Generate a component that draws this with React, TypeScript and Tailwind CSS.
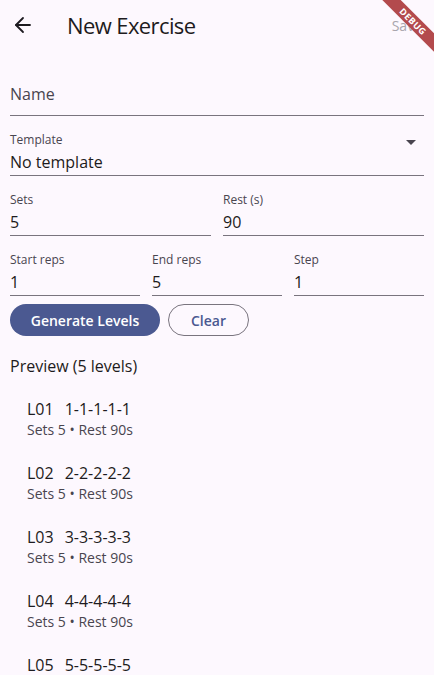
import { ArrowLeft } from 'lucide-react';

const levels = [1, 2, 3, 4, 5];

const Field = ({ label, value, className = '' }: { label: string; value: string; className?: string }) => (
  <div className={`flex flex-col pt-[16px] pb-[1px] border-b border-[#79747e] ${className}`}>
    <span className="text-[12px] leading-4 text-[#49454f]">{label}</span>
    <span className="mt-[2px] text-[16px] leading-6 text-[#1d1b20]">{value}</span>
  </div>
);

const App = () => {
  return (
    <div
      className="relative w-full min-h-[675px] overflow-hidden bg-[#fdf8fe] text-[#1d1b20]"
      style={{ fontFamily: '"Open Sans", "Noto Sans", sans-serif' }}
    >
      {/* app bar */}
      <header className="flex h-[50px] items-center">
        <div className="flex w-[44px] justify-center pl-[1px]">
          <ArrowLeft size={24} strokeWidth={1.8} className="text-[#1d1b20]" />
        </div>
        <h1 className="ml-[23px] flex-1 text-[22px] leading-7 tracking-[-0.6px] text-[#1d1b20]">New Exercise</h1>
        <span className="pr-[12px] text-[14px] font-medium text-[#a9a5ad]">Save</span>
      </header>

      <div className="px-[10px]">
        {/* name */}
        <div className="flex h-[66px] items-end pb-[9px] border-b border-[#79747e]">
          <span className="text-[16px] leading-6 text-[#49454f]">Name</span>
        </div>

        {/* template dropdown */}
        <div className="flex items-center border-b border-[#79747e]">
          <div className="flex flex-1 flex-col pt-[16px] pb-[1px]">
            <span className="text-[12px] leading-4 text-[#49454f]">Template</span>
            <span className="mt-[2px] text-[16px] font-medium leading-6 text-[#1d1b20]">No template</span>
          </div>
          <svg width="10" height="5" viewBox="0 0 10 5" className="mr-[8px] mb-[6px]">
            <path d="M0 0 L10 0 L5 5 Z" fill="#49454f" />
          </svg>
        </div>

        <div className="grid grid-cols-2 gap-x-[12px]">
          <Field label="Sets" value="5" />
          <Field label="Rest (s)" value="90" />
        </div>

        <div className="grid grid-cols-3 gap-x-[12px]">
          <Field label="Start reps" value="1" />
          <Field label="End reps" value="5" />
          <Field label="Step" value="1" />
        </div>

        <div className="mt-[8px] flex gap-[8px]">
          <button className="h-[32px] w-[150px] rounded-full bg-[#4b5991] text-[14px] font-semibold text-white">
            Generate Levels
          </button>
          <button className="h-[32px] w-[81px] rounded-full border border-[#79747e] text-[14px] font-semibold text-[#4b5991]">
            Clear
          </button>
        </div>

        <h2 className="mt-[18px] text-[16px] font-medium leading-6 text-[#1d1b20]">Preview (5 levels)</h2>

        <ul className="mt-[9px]">
          {levels.map((n) => (
            <li key={n} className="flex h-16 flex-col justify-center pl-[17px]">
              <div className="text-[16px] leading-[22px] text-[#1d1b20]">
                <span className="mr-[11px]">L0{n}</span>
                <span>{Array(5).fill(n).join('-')}</span>
              </div>
              <div className="text-[14px] leading-5 text-[#49454f]">Sets 5 • Rest 90s</div>
            </li>
          ))}
        </ul>
      </div>

      {/* debug ribbon */}
      <div className="absolute left-[353px] top-[15px] flex h-[13px] w-[120px] rotate-45 items-center justify-center bg-[#b34a4d]">
        <span className="text-[9px] font-bold leading-none tracking-[0.5px] text-white">DEBUG</span>
      </div>
    </div>
  );
};

export default App;
